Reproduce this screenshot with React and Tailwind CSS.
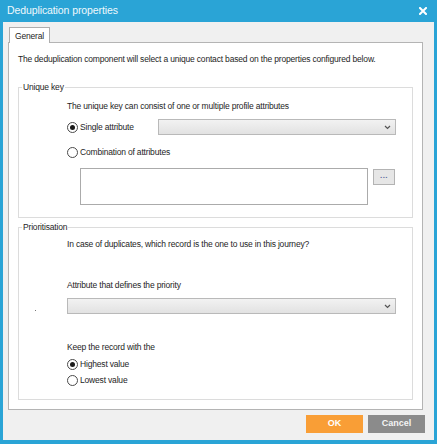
import { useState } from 'react'

const font = "font-['Liberation_Sans',Arial,sans-serif]"
const txt = 'text-[8.5px] leading-[12px] tracking-[-0.18px] text-[#1e1e1e]'

function Radio({ checked, label, onClick }) {
  return (
    <button type="button" onClick={onClick} className="flex h-[12px] items-center">
      <span className="flex h-[11px] w-[11px] items-center justify-center rounded-full border border-[#4a4a4a] bg-white">
        {checked && <span className="h-[5px] w-[5px] rounded-full bg-[#1a1a1a]" />}
      </span>
      <span className={`ml-[2px] ${txt}`}>{label}</span>
    </button>
  )
}

function Select({ className }) {
  return (
    <div
      className={`flex h-[16px] items-center justify-end border border-[#b9b9b9] bg-gradient-to-b from-[#f2f2f2] to-[#e2e2e2] pr-[4px] ${className}`}
    >
      <svg width="7" height="5" viewBox="0 0 7 5" aria-hidden="true">
        <path d="M1 1 L3.5 3.5 L6 1" fill="none" stroke="#555" strokeWidth="1.2" />
      </svg>
    </div>
  )
}

function GroupBox({ title, className, children }) {
  return (
    <fieldset className={`w-[395px] border border-[#dcdcdc] ${className}`}>
      <legend className={`ml-[3px] px-[1px] ${txt}`}>{title}</legend>
      {children}
    </fieldset>
  )
}

export default function App() {
  const [keyMode, setKeyMode] = useState('single')
  const [keep, setKeep] = useState('highest')

  return (
    <div className={`flex h-[444px] w-[437px] flex-col bg-[#2aa4d6] ${font}`}>
      <div className="flex h-[22px] items-center justify-between pl-[7px] pr-[10px]">
        <span className="text-[10.5px] tracking-[-0.1px] text-[#eef8fc]">Deduplication properties</span>
        <svg width="8" height="8" viewBox="0 0 8 8" aria-label="Close">
          <path d="M1 1 L7 7 M7 1 L1 7" stroke="#fff" strokeWidth="2" strokeLinecap="square" />
        </svg>
      </div>

      <div className="mx-[3px] mb-[4px] flex flex-1 flex-col bg-[#f0f0f0] pl-[5px] pt-[5px]">
        <div className="relative z-10 -mb-px ml-px flex h-[16px] w-[41px] items-center justify-center border border-b-0 border-[#adadad] bg-white">
          <span className={txt}>General</span>
        </div>

        <div className="w-[415px] border border-[#b4b4b4] bg-white px-[9px] pb-[9px]">
          <p className={`mt-[10px] ${txt}`}>
            The deduplication component will select a unique contact based on the properties configured below.
          </p>

          <GroupBox title="Unique key" className="mt-[16px] pb-[12px]">
            <div className="pl-[48px]">
              <p className={`mt-[7px] ${txt}`}>The unique key can consist of one or multiple profile attributes</p>
              <div className="mt-[7px] flex h-[16px] items-center">
                <div className="w-[91px]">
                  <Radio checked={keyMode === 'single'} label="Single attribute" onClick={() => setKeyMode('single')} />
                </div>
                <Select className="w-[238px]" />
              </div>
              <div className="mt-[11px]">
                <Radio checked={keyMode === 'combo'} label="Combination of attributes" onClick={() => setKeyMode('combo')} />
              </div>
              <div className="ml-[13px] mt-[10px] flex items-start">
                <div className="h-[37px] w-[288px] border border-[#ababab] bg-white" />
                <button
                  type="button"
                  className="ml-[5px] mt-px flex h-[16px] w-[22px] items-center justify-center border border-[#b3b3b3] bg-[#e6e6e6] pb-[2px] text-[8px] font-bold leading-none tracking-[0.5px] text-[#5a6a9a]"
                >
                  ...
                </button>
              </div>
            </div>
          </GroupBox>

          <GroupBox title="Prioritisation" className="mt-[3px] pb-[13px]">
            <div className="pl-[48px]">
              <p className={`mt-[5px] ${txt}`}>In case of duplicates, which record is the one to use in this journey?</p>
              <p className={`mt-[29px] ${txt}`}>Attribute that defines the priority</p>
            </div>
            <div className="mt-[7px] flex h-[16px] items-end">
              <span className="mb-[3px] ml-[16px] h-px w-px bg-[#777]" />
              <Select className="ml-[31px] w-[329px]" />
            </div>
            <div className="pl-[48px]">
              <p className={`mt-[27px] ${txt}`}>Keep the record with the</p>
              <div className="mt-[5px]">
                <Radio checked={keep === 'highest'} label="Highest value" onClick={() => setKeep('highest')} />
              </div>
              <div className="mt-[4px]">
                <Radio checked={keep === 'lowest'} label="Lowest value" onClick={() => setKeep('lowest')} />
              </div>
            </div>
          </GroupBox>
        </div>

        <div className="mr-[9px] mt-[5px] flex justify-end gap-[5px]">
          <button
            type="button"
            className="flex h-[18px] w-[57px] items-center justify-center bg-[#f99e36] text-[9px] font-bold text-white"
          >
            OK
          </button>
          <button
            type="button"
            className="flex h-[18px] w-[57px] items-center justify-center bg-[#8b8b8b] text-[9px] font-bold text-[#f4f4f4]"
          >
            Cancel
          </button>
        </div>
      </div>
    </div>
  )
}
